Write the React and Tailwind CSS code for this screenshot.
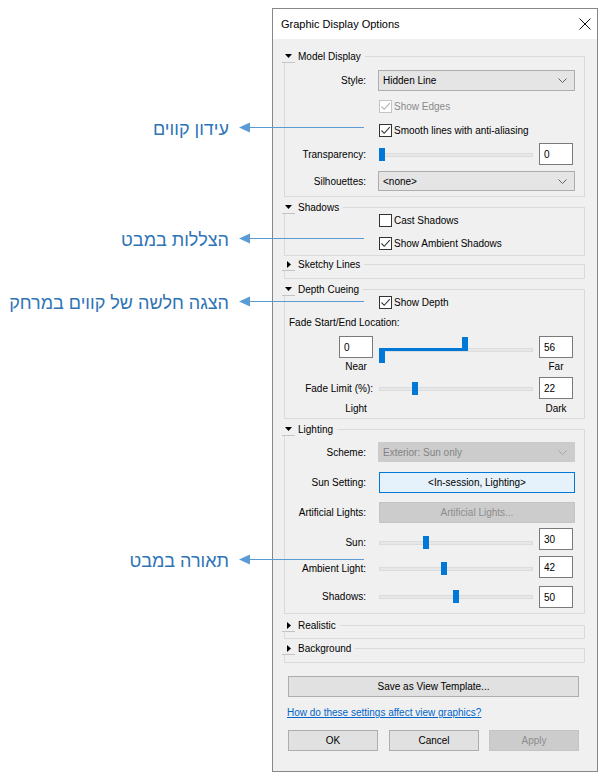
import React from 'react';

const ui = "font-['Liberation_Sans',Arial,sans-serif]";

const Tri = ({ open }) =>
  open ? (
    <svg width="7" height="4" viewBox="0 0 7 4"><path d="M0 0 H7 L3.5 4 Z" fill="#000" /></svg>
  ) : (
    <svg width="4" height="7" viewBox="0 0 4 7"><path d="M0 0 V7 L4 3.5 Z" fill="#000" /></svg>
  );

const Section = ({ title, open = true, className = '', children }) => (
  <div className={'w-[303px] ' + className}>
    <div className="flex h-[13px]">
      <div className="w-[13px] h-[13px] flex items-center justify-center border-b border-[#c4c4c4]">
        <Tri open={open} />
      </div>
      <span className="pl-[3px] pr-[4px] leading-[13px]">{title}</span>
      <div className="flex-1 h-[7px] self-end border-t border-r border-[#dadada]" />
    </div>
    <div className="ml-[2px] border-x border-b border-[#dadada]">{children}</div>
  </div>
);

const Chevron = ({ color = '#606060' }) => (
  <svg width="9" height="5" viewBox="0 0 9 5">
    <path d="M0.5 0.5 L4.5 4.5 L8.5 0.5" fill="none" stroke={color} strokeWidth="1" />
  </svg>
);

const Select = ({ value, disabled, h = 'h-[20px]' }) => (
  <div
    className={
      'w-[197px] flex items-center justify-between pl-[4px] pr-[7px] border ' +
      h +
      (disabled ? ' bg-[#cccccc] border-[#cccccc] text-[#838383]' : ' bg-[#e5e5e5] border-[#adadad]')
    }
  >
    <span>{value}</span>
    <Chevron color={disabled ? '#a8a8a8' : '#606060'} />
  </div>
);

const Check = ({ checked, disabled, label }) => (
  <div className="flex items-center h-[13px]">
    <div
      className={
        'w-[13px] h-[13px] border bg-white flex items-center justify-center ' +
        (disabled ? 'border-[#c4c4c4]' : 'border-[#333333]')
      }
    >
      {checked && (
        <svg width="11" height="11" viewBox="0 0 11 11">
          <path d="M1.5 5.5 L4.2 8.3 L9.8 2.2" fill="none" stroke={disabled ? '#b0b0b0' : '#333'} strokeWidth="1.1" />
        </svg>
      )}
    </div>
    <span className={'ml-[2px] ' + (disabled ? 'text-[#8a8a8a]' : '')}>{label}</span>
  </div>
);

const Input = ({ value }) => (
  <div className="w-[34px] h-[22px] shrink-0 border border-[#7a7a7a] bg-white flex items-center pl-[4px]">
    {value}
  </div>
);

const Slider = ({ value }) => (
  <div className="relative w-[154px] h-[13px] shrink-0">
    <div className="absolute left-0 right-0 top-[5px] h-[4px] bg-[#e7e7e7] border border-[#dcdcdc]" />
    <div className="absolute top-0 w-[6px] h-[13px] bg-[#0078d7]" style={{ left: (value / 100) * 148 }} />
  </div>
);

const Label = ({ children, w = 'w-[81px]' }) => <div className={w + ' shrink-0 text-right'}>{children}</div>;

const SliderRow = ({ label, value, mt, offset }) => (
  <div className={'flex items-start ' + mt}>
    <div className={'flex items-center h-[14px] ' + offset}>
      <Label>{label}</Label>
      <div className="ml-[13px]">
        <Slider value={value} />
      </div>
    </div>
    <div className="ml-[6px]">
      <Input value={value} />
    </div>
  </div>
);

const Btn = ({ children, w = 'w-[90px]', disabled, className = '' }) => (
  <div
    className={
      w +
      ' h-[21px] flex items-center justify-center border ' +
      (disabled ? 'bg-[#cccccc] border-[#c4c4c4] text-[#8d8d8d] ' : 'bg-[#e1e1e1] border-[#adadad] ') +
      className
    }
  >
    {children}
  </div>
);

const Note = ({ text, top }) => (
  <div className="absolute left-0 w-[364px] flex items-center justify-end h-[24px]" style={{ top }}>
    <span dir="rtl" className="text-[18px] text-[#2e74b5] mt-[4px] font-['Liberation_Sans','DejaVu_Sans',sans-serif] whitespace-nowrap">
      {text}
    </span>
    <svg className="ml-[10px]" width="125" height="11" viewBox="0 0 125 11">
      <path d="M0 5.5 L11 0.5 L11 10.5 Z" fill="#5b9bd5" />
      <path d="M10 5.5 H125" stroke="#5b9bd5" strokeWidth="1" />
    </svg>
  </div>
);

export default function App() {
  return (
    <div className={'relative w-[605px] h-[773px] bg-white text-[10px] text-black ' + ui}>
      <div className="ml-[272px] pt-[8px]">
        <div className="w-[326px] h-[764px] border border-[#878787] bg-[#f0f0f0] flex flex-col">
          {/* title bar */}
          <div className="h-[30px] bg-white flex items-center justify-between pl-[8px] pr-[6px]">
            <span className="text-[11px]">Graphic Display Options</span>
            <svg width="12" height="12" viewBox="0 0 12 12">
              <path d="M0.5 0.5 L11.5 11.5 M11.5 0.5 L0.5 11.5" stroke="#111" strokeWidth="1" />
            </svg>
          </div>

          <div className="pl-[9px] pt-[11px]">
            {/* Model Display */}
            <Section title="Model Display">
              <div className="pt-[7px] pb-[5px]">
                <div className="flex items-center h-[21px]">
                  <Label>Style:</Label>
                  <div className="ml-[12px]">
                    <Select value="Hidden Line" h="h-[21px]" />
                  </div>
                </div>
                <div className="pl-[94px] mt-[9px]">
                  <Check checked disabled label="Show Edges" />
                </div>
                <div className="pl-[94px] mt-[11px]">
                  <Check checked label="Smooth lines with anti-aliasing" />
                </div>
                <div className="flex items-center mt-[6px] h-[22px]">
                  <Label>Transparency:</Label>
                  <div className="ml-[13px]">
                    <Slider value={0} />
                  </div>
                  <div className="ml-[6px]">
                    <Input value="0" />
                  </div>
                </div>
                <div className="flex items-center mt-[6px] h-[20px]">
                  <Label>Silhouettes:</Label>
                  <div className="ml-[12px]">
                    <Select value="<none>" />
                  </div>
                </div>
              </div>
            </Section>

            {/* Shadows */}
            <Section title="Shadows" className="mt-[4px]">
              <div className="pl-[94px] pb-[5px]">
                <Check label="Cast Shadows" />
                <div className="mt-[10px]">
                  <Check checked label="Show Ambient Shadows" />
                </div>
              </div>
            </Section>

            <Section title="Sketchy Lines" open={false} className="mt-[2px]">
              <div className="h-[7px]" />
            </Section>

            {/* Depth Cueing */}
            <Section title="Depth Cueing" className="mt-[4px]">
              <div className="pb-[2px]">
                <div className="pl-[94px]">
                  <Check checked label="Show Depth" />
                </div>
                <div className="h-[16px] mt-[5px] pl-[4px] flex items-center">Fade Start/End Location:</div>
                <div className="flex items-start h-[22px] mt-[6px] pl-[54px]">
                  <Input value="0" />
                  <div className="relative ml-[6px] w-[154px] h-[22px] shrink-0">
                    <div className="absolute left-0 right-0 top-[12px] h-[4px] bg-[#e7e7e7] border border-[#dcdcdc]" />
                    <div className="absolute left-0 top-[12px] w-[86px] h-[3px] bg-[#0078d7]" />
                    <div className="absolute left-[83px] top-[1px] w-[6px] h-[14px] bg-[#0078d7]" />
                    <div className="absolute left-0 top-[13px] w-[6px] h-[14px] bg-[#0078d7]" />
                  </div>
                  <div className="ml-[6px]">
                    <Input value="56" />
                  </div>
                </div>
                <div className="flex h-[16px] items-center pl-[54px]">
                  <div className="w-[34px] text-center">Near</div>
                  <div className="w-[34px] text-center ml-[166px]">Far</div>
                </div>
                <div className="flex items-center mt-[3px] h-[22px]">
                  <Label w="w-[88px]">Fade Limit (%):</Label>
                  <div className="ml-[6px]">
                    <Slider value={22} />
                  </div>
                  <div className="ml-[6px]">
                    <Input value="22" />
                  </div>
                </div>
                <div className="flex h-[16px] mt-[1px] items-center pl-[54px]">
                  <div className="w-[34px] text-center">Light</div>
                  <div className="w-[34px] text-center ml-[166px]">Dark</div>
                </div>
              </div>
            </Section>

            {/* Lighting */}
            <Section title="Lighting" className="mt-[4px]">
              <div className="pt-[6px] pb-[5px]">
                <div className="flex items-center h-[20px]">
                  <Label>Scheme:</Label>
                  <div className="ml-[12px]">
                    <Select value="Exterior: Sun only" disabled />
                  </div>
                </div>
                <div className="flex items-center h-[21px] mt-[10px]">
                  <Label>Sun Setting:</Label>
                  <div className="ml-[13px] w-[196px] h-[21px] bg-[#e5f1fb] border border-[#0078d7] flex items-center justify-center">
                    &lt;In-session, Lighting&gt;
                  </div>
                </div>
                <div className="flex items-center h-[21px] mt-[9px]">
                  <Label>Artificial Lights:</Label>
                  <div className="ml-[13px]">
                    <Btn w="w-[196px]" disabled>Artificial Lights...</Btn>
                  </div>
                </div>
                <SliderRow label="Sun:" value={30} mt="mt-[5px]" offset="mt-[7px]" />
                <SliderRow label="Ambient Light:" value={42} mt="mt-[6px]" offset="mt-[5px]" />
                <SliderRow label="Shadows:" value={50} mt="mt-[8px]" offset="mt-[3px]" />
              </div>
            </Section>

            <Section title="Realistic" open={false} className="mt-[5px]">
              <div className="h-[6px]" />
            </Section>
            <Section title="Background" open={false} className="mt-[3px]">
              <div className="h-[7px]" />
            </Section>

            <div className="ml-[6px] mt-[13px]">
              <Btn w="w-[291px]">Save as View Template...</Btn>
            </div>
            <div className="ml-[5px] mt-[9px] h-[13px] flex items-center">
              <span className="text-[#0066cc] underline">How do these settings affect view graphics?</span>
            </div>
            <div className="ml-[6px] mt-[11px] flex">
              <Btn>OK</Btn>
              <Btn className="ml-[11px]">Cancel</Btn>
              <Btn className="ml-[10px]" disabled>Apply</Btn>
            </div>
          </div>
        </div>
      </div>

      <Note text="עידון קווים" top={115} />
      <Note text="הצללות במבט" top={226} />
      <Note text="הצגה חלשה של קווים במרחק" top={289} />
      <Note text="תאורה במבט" top={547} />
    </div>
  );
}
